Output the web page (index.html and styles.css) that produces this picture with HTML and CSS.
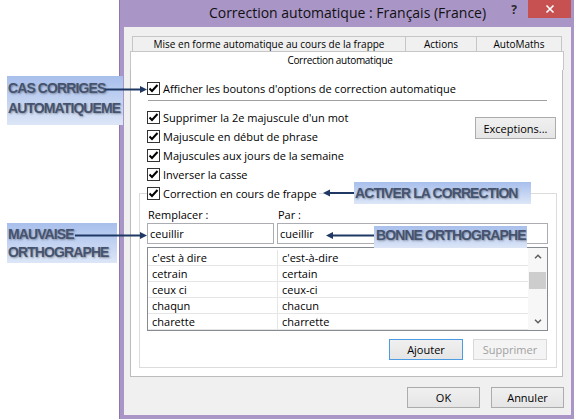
FILE: index.html
```html
<!DOCTYPE html>
<html lang="fr">
<head>
<meta charset="UTF-8">
<title>Correction automatique</title>
<link rel="stylesheet" href="styles.css">
</head>
<body>
<div id="page">
    <div class="win">
        <div class="titlebar">
            <span class="title">Correction automatique : Français (France)</span>
            <span class="help">?</span>
            <span class="close"><svg width="10" height="10" viewBox="0 0 10 10"><path d="M1.5 1.5l7 7M8.5 1.5l-7 7" stroke="#fff" stroke-width="1.6"/></svg></span>
        </div>
        <div class="client">
            <div class="tabs">
                <div class="tab-row">
                    <span class="tab t1">Mise en forme automatique au cours de la frappe</span>
                    <span class="tab t2">Actions</span>
                    <span class="tab t3">AutoMaths</span>
                </div>
                <div class="tab active">Correction automatique</div>
                <div class="panel">
                    <label class="check first"><span class="box"><svg viewBox="0 0 11 11"><path d="M1.5 5.5l2.5 2.5 5.5-6"/></svg></span>Afficher les boutons d'options de correction automatique</label>
                    <div class="sep"></div>
                    <div class="options">
                        <div class="checks">
                            <label class="check"><span class="box"><svg viewBox="0 0 11 11"><path d="M1.5 5.5l2.5 2.5 5.5-6"/></svg></span>Supprimer la 2e majuscule d'un mot</label>
                            <label class="check"><span class="box"><svg viewBox="0 0 11 11"><path d="M1.5 5.5l2.5 2.5 5.5-6"/></svg></span>Majuscule en début de phrase</label>
                            <label class="check"><span class="box"><svg viewBox="0 0 11 11"><path d="M1.5 5.5l2.5 2.5 5.5-6"/></svg></span>Majuscules aux jours de la semaine</label>
                            <label class="check"><span class="box"><svg viewBox="0 0 11 11"><path d="M1.5 5.5l2.5 2.5 5.5-6"/></svg></span>Inverser la casse</label>
                        </div>
                        <a href="javascript:;" class="btn exc">Exceptions...</a>
                    </div>
                    <fieldset class="group">
                        <legend><label class="check"><span class="box"><svg viewBox="0 0 11 11"><path d="M1.5 5.5l2.5 2.5 5.5-6"/></svg></span>Correction en cours de frappe</label></legend>
                        <div class="fields">
                            <span class="lbl">Remplacer :</span>
                            <span class="lbl">Par :</span>
                            <div class="input">ceuillir</div>
                            <div class="input">cueillir</div>
                        </div>
                        <div class="list">
                            <div class="rows">
                                <span>c'est à dire</span><span>c'est-à-dire</span>
                                <span>cetrain</span><span>certain</span>
                                <span>ceux ci</span><span>ceux-ci</span>
                                <span>chaqun</span><span>chacun</span>
                                <span>charette</span><span>charrette</span>
                            </div>
                            <div class="scroll">
                                <span class="arrow"><svg width="8" height="5" viewBox="0 0 8 5"><path d="M1 4.2l3-3 3 3"/></svg></span>
                                <span class="track"><span class="thumb"></span></span>
                                <span class="arrow"><svg width="8" height="5" viewBox="0 0 8 5"><path d="M1 0.8l3 3 3-3"/></svg></span>
                            </div>
                        </div>
                        <div class="list-btns">
                            <a href="javascript:;" class="btn default">Ajouter</a>
                            <a href="javascript:;" class="btn disabled">Supprimer</a>
                        </div>
                    </fieldset>
                </div>
            </div>
            <div class="footer">
                <a href="javascript:;" class="btn">OK</a>
                <a href="javascript:;" class="btn">Annuler</a>
            </div>
        </div>
    </div>

    <!-- annotations -->
    <div class="note n1">CAS CORRIGES<br>AUTOMATIQUEME</div>
    <div class="note n2">MAUVAISE<br>ORTHOGRAPHE</div>
    <div class="note n3">ACTIVER LA CORRECTION</div>
    <div class="note n4">BONNE ORTHOGRAPHE</div>
    <svg class="arrows" width="576" height="420" viewBox="0 0 576 420">
        <path d="M105 89.5H141M75 235.5H141M354 193H329M374 235.5H332"/>
        <polygon points="140,86 147,89.5 140,93"/>
        <polygon points="140,232 147,235.5 140,239"/>
        <polygon points="330,189.5 323,193 330,196.5"/>
        <polygon points="333,232 326,235.5 333,239"/>
    </svg>
</div>
</body>
</html>
```
FILE: styles.css
```css
body {
    margin: 0;
    background: #fff;
    font: 11px "Open Sans", sans-serif;
    color: #000;
}
a {
    text-decoration: none;
    color: #000;
}
#page {
    position: relative;
    width: 576px;
    height: 420px;
    overflow: hidden;
}

/* window frame */
.win {
    margin-left: 119px;
    width: 455px;
    height: 419px;
    box-sizing: border-box;
    display: flex;
    flex-direction: column;
    padding: 0 3px 4px 4px;
    background: #a995c6;
    border-left: 1px solid #8d79ad;
}
.titlebar {
    height: 27px;
    flex-shrink: 0;
    display: flex;
    align-items: flex-start;
}
.title {
    flex: 1;
    padding-left: 67px;
    text-align: center;
    font-size: 14px;
    line-height: 25px;
    white-space: nowrap;
    color: #111;
}
.help {
    width: 20px;
    margin-right: 4px;
    text-align: center;
    font-weight: bold;
    font-size: 12px;
    line-height: 19px;
    color: #2b2b2b;
}
.close {
    width: 43px;
    height: 18px;
    display: flex;
    align-items: center;
    justify-content: center;
    background: #c75050;
}
.client {
    flex: 1;
    display: flex;
    flex-direction: column;
    padding: 9px 7px 0 6px;
    background: #f0f0f0;
}

/* tabs */
.tab-row {
    display: flex;
    margin-left: 2px;
}
.tab {
    box-sizing: border-box;
    border: 1px solid #c6c6c6;
    border-bottom: 0;
    text-align: center;
    font-size: 10px;
    white-space: nowrap;
}
.tab-row .tab {
    height: 15px;
    line-height: 14px;
    margin-right: -1px;
    background: #f0f0f0;
}
.t1 { width: 274px; }
.t2 { width: 72px; }
.t3 { width: 86px; }
.tab.active {
    height: 19px;
    line-height: 17px;
    padding-right: 14px;
    letter-spacing: -0.3px;
    background: #fff;
}
.panel {
    height: 307px;
    box-sizing: border-box;
    margin-right: 1px;
    padding-top: 9px;
    background: #fff;
    border: 1px solid #bcbcbc;
    border-top: 0;
}

/* checkboxes */
.check {
    display: flex;
    align-items: center;
    gap: 3px;
    height: 19px;
    white-space: nowrap;
}
.panel > .check,
.checks {
    margin-left: 16px;
}
.box {
    width: 13px;
    height: 13px;
    box-sizing: border-box;
    border: 1px solid #333;
    background: #fff;
}
.box svg {
    display: block;
    width: 11px;
    height: 11px;
    fill: none;
    stroke: #000;
    stroke-width: 2;
}
.sep {
    height: 1px;
    margin: 2px 15px 7px 17px;
    background: #a0a0a0;
}
.options {
    display: flex;
    justify-content: space-between;
    align-items: flex-start;
    margin-right: 6px;
}

/* buttons */
.btn {
    display: flex;
    align-items: center;
    justify-content: center;
    box-sizing: border-box;
    height: 21px;
    border: 1px solid #acacac;
    background: linear-gradient(#f0f0f0, #e5e5e5);
}
.exc {
    width: 81px;
    height: 22px;
    margin-top: 9px;
}
.default {
    border-color: #4c9be5;
}
.disabled {
    border-color: #d9d9d9;
    background: #f4f4f4;
    color: #a0a0a0;
}

/* group */
.group {
    margin: 0 5px 0 8px;
    padding: 4px 8px 7px 7px;
    border: 1px solid #dcdcdc;
    min-width: 0;
}
.group legend {
    padding: 0 2px 0 0;
}
.fields {
    display: grid;
    grid-template-columns: 127px 271px;
    column-gap: 3px;
}
.lbl {
    padding-left: 1px;
    line-height: 16px;
}
.input {
    height: 21px;
    box-sizing: border-box;
    padding-left: 2px;
    line-height: 19px;
    border: 1px solid #abadb3;
    background: #fff;
}
.list {
    display: flex;
    height: 84px;
    box-sizing: border-box;
    margin-top: 3px;
    border: 1px solid #868a91;
}
.rows {
    flex: 1;
    display: grid;
    grid-template-columns: 130px 1fr;
    align-content: start;
    padding-top: 2px;
}
.rows span {
    height: 16px;
    box-sizing: border-box;
    padding-left: 4px;
    line-height: 15px;
    border-bottom: 1px solid #e6e6e6;
}
.rows span:nth-child(odd) {
    border-right: 1px solid #e6e6e6;
}
.scroll {
    width: 19px;
    display: flex;
    flex-direction: column;
    background: #f7f7f7;
}
.arrow {
    height: 17px;
    display: flex;
    align-items: center;
    justify-content: center;
}
.arrow svg {
    fill: none;
    stroke: #5f5f5f;
    stroke-width: 1.5;
}
.track {
    flex: 1;
    padding-top: 7px;
}
.thumb {
    display: block;
    height: 17px;
    margin: 0 1px;
    background: #cdcdcd;
}
.list-btns {
    display: flex;
    justify-content: flex-end;
    gap: 10px;
    margin: 8px 1px 0 0;
}
.list-btns .btn {
    width: 74px;
}
.footer {
    display: flex;
    justify-content: flex-end;
    gap: 11px;
    margin-top: 10px;
}
.footer .btn {
    width: 73px;
}

/* annotations over the screenshot */
.note {
    position: absolute;
    box-sizing: border-box;
    overflow: hidden;
    white-space: nowrap;
    background: linear-gradient(#a8bfec, #dce6f7);
    font: bold 14px/20px "Liberation Sans", Arial, sans-serif;
    letter-spacing: -0.9px;
    color: #45536f;
    text-shadow: 1px 1px 2px rgba(0, 0, 0, .35);
}
.n1 {
    left: 7px;
    top: 76px;
    width: 116px;
    height: 49px;
    padding: 2px 0 0 1px;
}
.n2 {
    left: 7px;
    top: 223px;
    width: 110px;
    height: 40px;
    padding: 2px 0 0 1px;
    line-height: 18px;
}
.n3 {
    left: 354px;
    top: 182px;
    width: 177px;
    height: 22px;
    padding-left: 1px;
    line-height: 22px;
}
.n4 {
    left: 374px;
    top: 226px;
    width: 153px;
    height: 22px;
    padding-left: 2px;
    line-height: 19px;
}
.arrows {
    position: absolute;
    left: 0;
    top: 0;
}
.arrows path {
    fill: none;
    stroke: #1f3864;
    stroke-width: 2;
}
.arrows polygon {
    fill: #1f3864;
}
```
